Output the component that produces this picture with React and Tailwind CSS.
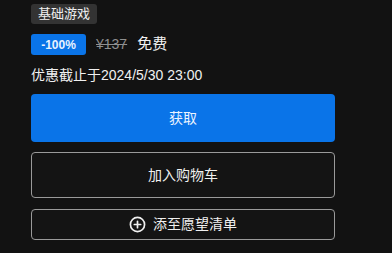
import React from 'react'

function PlusCircle() {
  return (
    <svg width="17" height="17" viewBox="0 0 24 24" fill="none" stroke="currentColor" strokeWidth="2.4" strokeLinecap="round">
      <circle cx="12" cy="12" r="10" />
      <path d="M12 7.5v9M7.5 12h9" />
    </svg>
  )
}

export default function App() {
  return (
    <div
      className="w-[392px] h-[253px] bg-[#121212] text-[#ececec] overflow-hidden"
      style={{ fontFamily: '"Liberation Sans", "Noto Sans CJK SC", sans-serif' }}
    >
      <div className="pl-[31px] pt-[4px] w-[335px] flex flex-col">
        <div className="flex">
          <span className="flex items-center h-[20px] px-[7px] rounded-[3px] bg-[#333333] text-[13px] text-[#f0f0f0]">基础游戏</span>
        </div>
        <div className="flex items-center mt-[10px] h-[21px]">
          <span className="flex items-center justify-center h-[21px] w-[55px] rounded-[3px] bg-[#0a74e8] text-[12px] font-bold text-[#e8f2ff]">-100%</span>
          <span className="ml-[10px] text-[14px] text-[#8f8f8f] line-through">¥137</span>
          <span className="ml-[10px] text-[15px] text-[#f2f2f2]">免费</span>
        </div>
        <div className="mt-[10px] text-[14px] text-[#f0f0f0] leading-[20px]">优惠截止于2024/5/30 23:00</div>
        <button className="mt-[9px] h-[48px] w-full rounded-[4px] bg-[#0a74e8] text-[14px] text-[#eaf3ff]">获取</button>
        <button className="mt-[10px] h-[46px] w-full rounded-[4px] border border-[#9a9a9a] bg-[#141414] text-[14px] text-[#f0f0f0]">加入购物车</button>
        <button className="mt-[11px] h-[31px] w-full rounded-[4px] border border-[#9a9a9a] bg-[#141414] text-[14px] text-[#f0f0f0] flex items-center justify-center gap-[7px]">
          <PlusCircle />
          <span>添至愿望清单</span>
        </button>
      </div>
    </div>
  )
}
